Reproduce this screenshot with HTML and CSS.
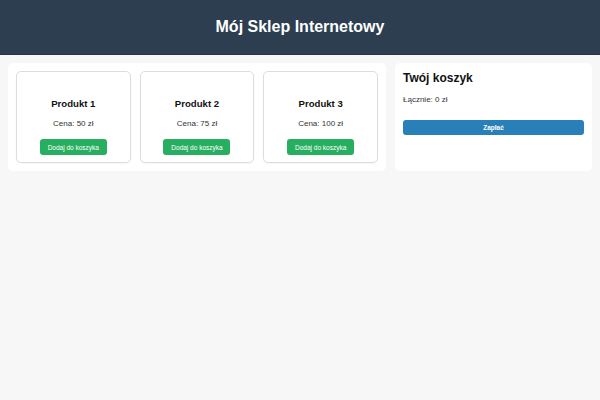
FILE: index.html
```html
<!DOCTYPE html>
<html lang="pl">
<head>
<meta charset="utf-8">
<title>Mój Sklep Internetowy</title>
<link rel="stylesheet" href="styles.css">
</head>
<body>
<header class="site-header">
  <h1 class="site-title">Mój Sklep Internetowy</h1>
</header>
<main class="layout">
  <section class="products">
    <div class="card">
      <h3 class="card-title">Produkt 1</h3>
      <p class="card-price">Cena: 50 zł</p>
      <button class="btn-add">Dodaj do koszyka</button>
    </div>
    <div class="card">
      <h3 class="card-title">Produkt 2</h3>
      <p class="card-price">Cena: 75 zł</p>
      <button class="btn-add">Dodaj do koszyka</button>
    </div>
    <div class="card">
      <h3 class="card-title">Produkt 3</h3>
      <p class="card-price">Cena: 100 zł</p>
      <button class="btn-add">Dodaj do koszyka</button>
    </div>
  </section>
  <aside class="cart">
    <h2 class="cart-title">Twój koszyk</h2>
    <p class="cart-total">Łącznie: 0 zł</p>
    <button class="btn-pay">Zapłać</button>
  </aside>
</main>
</body>
</html>
```
FILE: styles.css
```css
* { box-sizing: border-box; }
body {
  margin: 0;
  background: #f7f7f7;
  font-family: "Liberation Sans", Arial, sans-serif;
  color: #222;
}
.site-header {
  background: #2c3e50;
  height: 55px;
  display: flex;
  align-items: center;
  justify-content: center;
  border-bottom: 1px solid #26364a;
}
.site-title {
  margin: 0;
  color: #fff;
  font-size: 16px;
  font-weight: bold;
}
.layout {
  display: flex;
  gap: 9px;
  padding: 8px;
  align-items: flex-start;
}
.products {
  flex: 1;
  min-width: 0;
  background: #fff;
  border-radius: 5px;
  padding: 8px;
  display: grid;
  grid-template-columns: repeat(3, 1fr);
  gap: 9px;
}
.card {
  border: 1px solid #ddd;
  border-radius: 5px;
  padding: 25px 6px 7px;
  display: flex;
  flex-direction: column;
  align-items: center;
  box-shadow: 0 1px 2px rgba(0,0,0,0.04);
}
.card-title {
  margin: 0;
  font-size: 9.6px;
  line-height: 13px;
  font-weight: bold;
  color: #111;
}
.card-price {
  margin: 9px 0 10px;
  font-size: 8px;
  line-height: 10px;
  color: #333;
}
.btn-add {
  background: #27ae60;
  color: #fff;
  border: none;
  border-radius: 3px;
  font-family: inherit;
  font-size: 6.5px;
  height: 16px;
  width: 67px;
  padding: 0;
}
.cart {
  width: 197px;
  height: 108px;
  background: #fff;
  border-radius: 5px;
  padding: 8px;
}
.cart-title {
  margin: 0;
  font-size: 12px;
  line-height: 15px;
  font-weight: bold;
  color: #111;
}
.cart-total {
  margin: 9px 0 15px;
  font-size: 8px;
  line-height: 10px;
  color: #333;
}
.btn-pay {
  display: block;
  width: 100%;
  height: 15px;
  background: #2980b9;
  color: #fff;
  border: none;
  border-radius: 3px;
  font-family: inherit;
  font-size: 6.5px;
  font-weight: bold;
  padding: 0;
}
```
